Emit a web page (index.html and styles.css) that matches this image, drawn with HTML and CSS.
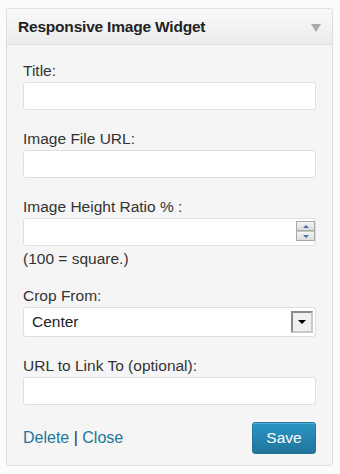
FILE: index.html
```html
<!DOCTYPE html>
<html lang="en">
<head>
    <meta charset="UTF-8">
    <title>Responsive Image Widget</title>
    <link rel="stylesheet" href="styles.css">
</head>
<body>
    <div class="widget">
        <div class="widget-top">
            <div class="widget-title">Responsive Image Widget</div>
            <span class="widget-toggle"></span>
        </div>

        <div class="widget-inside">
            <div class="field">
                <label>Title:</label>
                <div class="text-input"></div>
            </div>
            <div class="field">
                <label>Image File URL:</label>
                <div class="text-input"></div>
            </div>
            <div class="field">
                <label>Image Height Ratio % :</label>
                <div class="text-input number-input">
                    <div class="spinner">
                        <span class="spin up"></span>
                        <span class="spin down"></span>
                    </div>
                </div>
                <div class="note">(100 = square.)</div>
            </div>
            <div class="field">
                <label>Crop From:</label>
                <div class="select">
                    <span>Center</span>
                    <span class="select-btn"></span>
                </div>
            </div>
            <div class="field">
                <label>URL to Link To (optional):</label>
                <div class="text-input"></div>
            </div>

            <div class="widget-control">
                <div class="links">
                    <a href="#">Delete</a> | <a href="#">Close</a>
                </div>
                <button class="button-primary">Save</button>
            </div>
        </div>
    </div>
</body>
</html>
```

FILE: styles.css
```css
body {
    margin: 0;
    padding: 8px 7px 8px 6px;
    background: #fbfbfb;
    font-family: 'Liberation Sans', Arial, sans-serif;
    font-size: 15.5px;
    color: #333;
}

.widget {
    border: 1px solid #dfdfdf;
    border-radius: 3px;
    background: #f5f5f5;
    box-shadow: inset 0 1px 0 #fff;
}

.widget-top {
    height: 35px;
    display: flex;
    align-items: center;
    justify-content: space-between;
    padding: 0 11px;
    background: linear-gradient(#f9f9f9, #ececec);
    border-bottom: 1px solid #dfdfdf;
    border-radius: 3px 3px 0 0;
}

.widget-title {
    font-weight: bold;
    font-size: 15.5px;
    letter-spacing: -0.2px;
    color: #222;
}

.widget-toggle {
    width: 0;
    height: 0;
    border-left: 5px solid transparent;
    border-right: 5px solid transparent;
    border-top: 8px solid #aaa;
    margin-top: 2px;
}

.widget-inside {
    display: flex;
    flex-direction: column;
    gap: 20px;
    padding: 17px 16px 11px 16px;
}

.field {
    display: flex;
    flex-direction: column;
    gap: 3px;
}

.field label {
    line-height: 17px;
    color: #333;
}

.text-input {
    height: 26px;
    background: #fff;
    border: 1px solid #dfdfdf;
    border-radius: 3px;
    position: relative;
}

.spinner {
    position: absolute;
    right: 0;
    top: 2px;
    display: flex;
    flex-direction: column;
    gap: 0;
}

.spin {
    width: 17px;
    height: 8px;
    border: 1px solid #a9a9a9;
    background: linear-gradient(#f4f4f4, #dcdcdc);
    display: flex;
    align-items: center;
    justify-content: center;
}

.spin + .spin {
    border-top-color: #c4c4c4;
}

.spin::after {
    content: '';
    border-left: 3px solid transparent;
    border-right: 3px solid transparent;
}

.spin.up::after {
    border-bottom: 3px solid #4a6ea9;
}

.spin.down::after {
    border-top: 3px solid #4a6ea9;
}

.note {
    margin-top: 1px;
    line-height: 17px;
}

.select {
    height: 28px;
    display: flex;
    align-items: center;
    justify-content: space-between;
    padding: 0 2px 0 8px;
    background: #fff;
    border: 1px solid #dfdfdf;
    border-radius: 3px;
    color: #222;
}

.select-btn {
    width: 18px;
    height: 18px;
    border: 2px solid;
    border-color: #8a8a8a #c8c8c8 #c8c8c8 #8a8a8a;
    background: #f0f0f0;
    display: flex;
    align-items: center;
    justify-content: center;
}

.select-btn::after {
    content: '';
    border-left: 4px solid transparent;
    border-right: 4px solid transparent;
    border-top: 4px solid #000;
}

.widget-control {
    display: flex;
    align-items: center;
    justify-content: space-between;
    margin-top: -3px;
}

.links {
    font-size: 16px;
    color: #333;
}

.links a {
    color: #21759b;
    text-decoration: none;
}

.button-primary {
    width: 64px;
    height: 32px;
    border: 1px solid #21759b;
    border-radius: 3px;
    background: linear-gradient(#2a95c5, #21759b);
    color: #fff;
    font-family: inherit;
    font-size: 15.5px;
    box-shadow: inset 0 1px 0 rgba(120, 200, 230, 0.5);
}
```
